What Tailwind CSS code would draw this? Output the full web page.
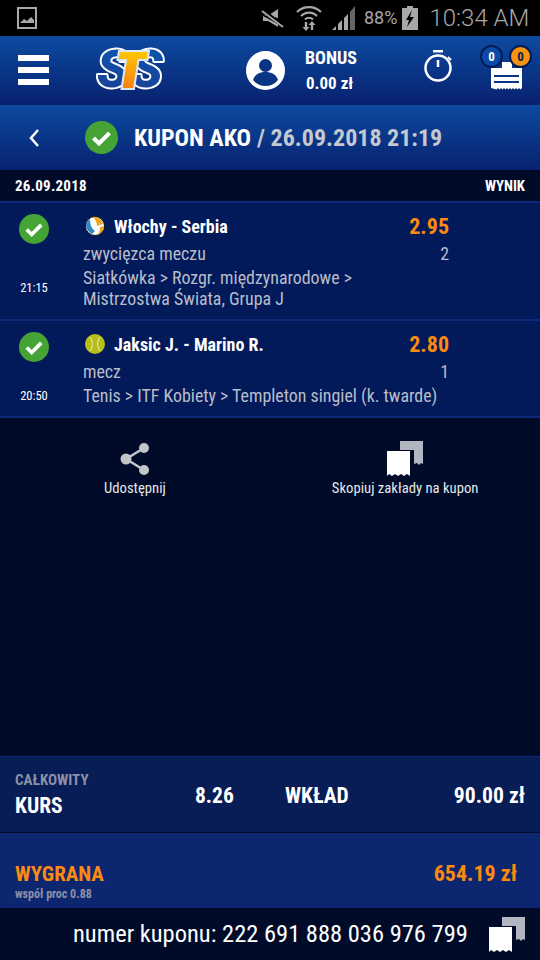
<!DOCTYPE html>
<html lang="en">
<head>
  <meta charset="UTF-8">
  <meta name="viewport" content="width=device-width, initial-scale=1.0">
  <title>Kupon AKO</title>
  <script src="https://cdn.jsdelivr.net/npm/@tailwindcss/browser@4"></script>
</head>
<body>
  <div class="w-[540px] h-[960px] overflow-hidden flex flex-col bg-[#000b29] font-['Roboto','Liberation_Sans',sans-serif] font-stretch-condensed text-white">

    <!-- status bar -->
    <div class="h-9 shrink-0 bg-black flex items-center pl-[17px] text-[#a8a8a8] whitespace-nowrap font-stretch-normal">
      <svg width="20" height="24" viewBox="0 0 20 24"><rect x="1" y="2" width="18" height="20" fill="none" stroke="#a8a8a8" stroke-width="2"/><path d="M3 17l4-4 3 2 4-4 3 3v3H3z" fill="#a8a8a8"/></svg>
      <svg class="ml-[224px]" width="24" height="20" viewBox="0 0 24 20"><path d="M2 7h6l9-6v9zM2 8v5h5l10 6v-3z" fill="#a8a8a8"/><path d="M1 2l21 16" stroke="#000" stroke-width="4"/><path d="M1 3l21 16" stroke="#a8a8a8" stroke-width="2"/></svg>
      <svg class="ml-[11px]" width="26" height="28" viewBox="0 0 26 28"><path d="M1 8a17 17 0 0 1 24 0M5 12a11 11 0 0 1 16 0M9 15.500a5.500 5.500 0 0 1 8 0" fill="none" stroke="#a8a8a8" stroke-width="2.200"/><path d="M16 17l-3.500 4h2.300v5h2.400v-5h2.300zM10 27l3.500-4h-2.300v-5H8.800v5H6.500z" fill="#a8a8a8"/></svg>
      <svg class="ml-[9px]" width="25" height="26" viewBox="0 0 25 26"><path d="M1 25l4-4v4zM7 25v-6l4-4v10zM13 25V13l4-4v16z" fill="#a8a8a8"/><path d="M19 25V7l5-6v24z" fill="#666"/></svg>
      <span class="ml-[8px] text-[18px] leading-none">88%</span>
      <svg class="ml-[5px]" width="16" height="24" viewBox="0 0 16 24"><path d="M5 0h6v2h5v22H0V2h5z" fill="#a8a8a8"/><path d="M10 4l-6 10h3l-2 7 7-10H8z" fill="#000"/></svg>
      <span class="ml-[11px] text-[24px] leading-none font-light">10:34 AM</span>
    </div>

    <!-- top nav -->
    <div class="h-[68px] shrink-0 relative flex items-center bg-gradient-to-b from-[#0d4ba1] to-[#08216f]">
      <div class="ml-[18px] w-[31px] flex flex-col gap-[6px]">
        <div class="h-[6px] bg-white"></div>
        <div class="h-[6px] bg-white"></div>
        <div class="h-[6px] bg-white"></div>
      </div>
      <svg class="ml-[49px] overflow-visible font-stretch-normal" width="68" height="46" viewBox="0 0 68 46">
        <defs>
          <linearGradient id="tfill" x1="0" y1="0" x2="0" y2="1"><stop offset="0" stop-color="#ffc800"/><stop offset="1" stop-color="#f57f17"/></linearGradient>
          <linearGradient id="sfill" x1="0" y1="0" x2="0" y2="1"><stop offset="0" stop-color="#0b57ad"/><stop offset="1" stop-color="#1b3f96"/></linearGradient>
        </defs>
        <g font-family="Roboto" font-style="italic" font-weight="900" font-size="52" fill="url(#sfill)" stroke="#fff" stroke-width="4" stroke-linejoin="round" paint-order="stroke">
          <text x="-1" y="40">S</text>
          <text x="33" y="40">S</text>
        </g>
        <path d="M21 4h30l-1.500 9h-9L36 42H23.500l4.500-29h-8.500z" fill="url(#tfill)" stroke="#dbe6f6" stroke-width="2"/>
      </svg>
      <svg class="ml-[80px]" width="39" height="39" viewBox="0 0 39 39"><circle cx="19.500" cy="19.500" r="19.500" fill="#fff"/><circle cx="19.500" cy="14.500" r="6.500" fill="#0a3585"/><path d="M7 29c2-6 7-8 12.500-8S30 23 32 29a16 16 0 0 1-25 0z" fill="#0a3585"/></svg>
      <div class="ml-[20px] mt-[4px] w-[60px] flex flex-col items-start font-bold">
        <span class="text-[18px] leading-[22px]">BONUS</span>
        <span class="text-[17px] leading-[28px] pl-[1px]">0.00 zł</span>
      </div>
      <svg class="ml-[58px] mb-[7px]" width="30" height="33" viewBox="0 0 30 33"><path d="M10 1h10" stroke="#fff" stroke-width="3"/><circle cx="15" cy="18" r="12.500" fill="none" stroke="#fff" stroke-width="2.500"/><path d="M15 10v7" stroke="#fff" stroke-width="2.500"/><path d="M25 7l3 3" stroke="#fff" stroke-width="2"/></svg>
      <svg class="ml-[38px] mt-[12px]" width="31" height="28" viewBox="0 0 31 28"><path d="M11 0h10v6h10v20l-1.500 1.500-1.500-1.500-1.500 1.500-1.500-1.500-1.500 1.500-1.500-1.500-1.500 1.500-1.500-1.500-1.500 1.500-1.500-1.500-1.500 1.500-1.500-1.500-1.500 1.500-1.500-1.500-1.500 1.500-1.500-1.500-1.500 1.500L0 26V6h11z" fill="#fff"/><path d="M3 14h25M3 20h25" stroke="#0a3585" stroke-width="2"/></svg>
      <span class="absolute left-[480px] top-[9px] w-[23px] h-[23px] rounded-full bg-[#0b4aa6] border-2 border-[#041b55] flex items-center justify-center text-[13px] font-bold">0</span>
      <span class="absolute left-[509px] top-[9px] w-[23px] h-[23px] rounded-full bg-[#f7930e] border-2 border-[#041b55] flex items-center justify-center text-[13px] font-bold text-[#05205f]">0</span>
    </div>

    <!-- title bar -->
    <div class="h-[66px] shrink-0 flex items-center bg-gradient-to-b from-[#0d4ba1] to-[#08216f] border-t border-[#08246f]">
      <svg class="ml-[28px]" width="12" height="18" viewBox="0 0 12 18"><path d="M10 1L3 9l7 8" fill="none" stroke="#fff" stroke-width="2.500"/></svg>
      <svg class="ml-[45px]" width="33" height="33" viewBox="0 0 33 33"><circle cx="16.500" cy="16.500" r="16.500" fill="#46a436"/><path d="M8.500 17l5.500 5.500 10.500-10.500" fill="none" stroke="#fff" stroke-width="4"/></svg>
      <span class="ml-[16px] text-[24px] font-bold">KUPON AKO</span>
      <span class="ml-[6px] text-[24px] font-bold text-[#c4c8d0]">/ 26.09.2018 21:19</span>
    </div>

    <!-- date row -->
    <div class="h-[33px] shrink-0 flex items-center justify-between px-[15px] pt-[1px] bg-[#000b29] font-bold border-b-2 border-[#0c2a7a]">
      <span class="text-[15px] tracking-[0.25px]">26.09.2018</span>
      <span class="text-[14.700px]">WYNIK</span>
    </div>

    <!-- bet rows -->
    <div class="h-[118px] shrink-0 flex bg-[#021a5a] border-b-2 border-[#0c2a7a]">
      <div class="w-[68px] shrink-0 flex flex-col items-center pt-[11px]">
        <svg width="30" height="30" viewBox="0 0 33 33"><circle cx="16.500" cy="16.500" r="16.500" fill="#46a436"/><path d="M8.500 17l5.500 5.500 10.500-10.500" fill="none" stroke="#fff" stroke-width="4"/></svg>
        <span class="mt-[36px] text-[12.500px] leading-4">21:15</span>
      </div>
      <div class="w-[381px] pl-[15px]">
        <div class="h-[22px] mt-[12px] flex items-center">
          <svg class="ml-[2px]" width="20" height="20" viewBox="0 0 20 20"><circle cx="10" cy="10" r="9.500" fill="#fff" stroke="#111" stroke-width="1"/><path d="M8 1c4-1 9 2 10 7l-6 2C12 6 10 3 8 1z" fill="#f0a820"/><path d="M1 8c1-2 2-4 4-5 0 5 1 9 5 12l-3 3C3 16 1 12 1 8z" fill="#2f88c6"/><path d="M19 10c0 4-3 8-7 9 2-2 3-4 3-8z" fill="#f0a820"/></svg>
          <span class="ml-[9px] text-[18px] font-bold">Włochy - Serbia</span>
          <span class="ml-auto text-[22px] font-bold text-[#fb8a0f]">2.95</span>
        </div>
        <div class="mt-[6px] flex justify-between text-[17.900px] leading-[22px] text-[#b9bdc9]"><span>zwycięzca meczu</span><span>2</span></div>
        <p class="mt-[2px] text-[17.900px] leading-[21px] text-[#b9bdc9]">Siatkówka &gt; Rozgr. międzynarodowe &gt;<br>Mistrzostwa Świata, Grupa J</p>
      </div>
    </div>
    <div class="h-[97px] shrink-0 flex bg-[#021a5a] border-b-2 border-[#0c2a7a]">
      <div class="w-[68px] shrink-0 flex flex-col items-center pt-[11px]">
        <svg width="30" height="30" viewBox="0 0 33 33"><circle cx="16.500" cy="16.500" r="16.500" fill="#46a436"/><path d="M8.500 17l5.500 5.500 10.500-10.500" fill="none" stroke="#fff" stroke-width="4"/></svg>
        <span class="mt-[26px] text-[12.500px] leading-4">20:50</span>
      </div>
      <div class="w-[381px] pl-[15px]">
        <div class="h-[22px] mt-[12px] flex items-center">
          <svg class="ml-[2px]" width="20" height="20" viewBox="0 0 20 20"><circle cx="10" cy="10" r="10" fill="#b7c01a"/><path d="M5 3c3 4 3 10 0 14M15 3c-3 4-3 10 0 14" fill="none" stroke="#eef0b0" stroke-width="1"/></svg>
          <span class="ml-[9px] text-[18px] font-bold">Jaksic J. - Marino R.</span>
          <span class="ml-auto text-[22px] font-bold text-[#fb8a0f]">2.80</span>
        </div>
        <div class="mt-[6px] flex justify-between text-[17.900px] leading-[22px] text-[#b9bdc9]"><span>mecz</span><span>1</span></div>
        <p class="mt-[2px] text-[17.900px] leading-[21px] text-[#b9bdc9]">Tenis &gt; ITF Kobiety &gt; Templeton singiel (k. twarde)</p>
      </div>
    </div>

    <!-- actions -->
    <div class="flex-1 flex items-start bg-[#000b29] pt-[24px]">
      <div class="ml-[104px] flex flex-col items-center">
        <svg width="30" height="34" viewBox="0 0 30 34"><path d="M24 6L6 17l18 11" fill="none" stroke="#c3c5ca" stroke-width="2.500"/><circle cx="24" cy="6" r="5" fill="#c3c5ca"/><circle cx="6" cy="17" r="5.500" fill="#c3c5ca"/><circle cx="24" cy="28" r="5" fill="#c3c5ca"/></svg>
        <span class="mt-[2px] text-[14.700px] leading-[20px] text-[#e6e7ea]">Udostępnij</span>
      </div>
      <div class="ml-[166px] flex flex-col items-center -mt-[2px]">
        <svg width="37" height="36" viewBox="0 0 37 36"><path d="M13 1h23v23l-2-1-2 2-2-2-3 1V10H13z" fill="#b2b6c0"/><path d="M0 11h23v25l-3-2-3 2-3-2-3 2-3-2-3 2-3-2-2 2z" fill="#fff"/></svg>
        <span class="mt-[2px] text-[14.700px] leading-[20px] text-[#e6e7ea]">Skopiuj zakłady na kupon</span>
      </div>
    </div>

    <!-- totals -->
    <div class="h-[77px] shrink-0 flex items-center bg-[#081c56] border-t border-[#0c2a7a] border-b border-b-[#000b29] px-[15px] font-bold">
      <div class="w-[180px]">
        <div class="text-[15px] leading-[18px] text-[#8b90a5]">CAŁKOWITY</div>
        <div class="mt-[5px] text-[21.500px] leading-[24px]">KURS</div>
      </div>
      <span class="w-[90px] mt-[2px] text-[21.500px] leading-none">8.26</span>
      <span class="mt-[3px] text-[21.500px] leading-none">WKŁAD</span>
      <span class="ml-auto mt-[2px] text-[21.700px] leading-none">90.00 zł</span>
    </div>
    <div class="h-[75px] shrink-0 flex items-end bg-[#0d2670] pl-[15px] pr-[23px] pb-[7px] font-bold">
      <div>
        <div class="text-[21px] leading-[24px] mb-[-1px] text-[#fb8a0f]">WYGRANA</div>
        <div class="mt-[2px] text-[12px] leading-[14px] text-[#8b90a5]">współ proc 0.88</div>
      </div>
      <span class="ml-auto mb-[16px] text-[22px] leading-none text-[#fb8a0f]">654.19 zł</span>
    </div>

    <!-- coupon number -->
    <div class="h-[52px] shrink-0 flex items-center bg-[#000b29] pl-[73px]">
      <span class="mt-[1px] text-[24.500px] leading-none whitespace-nowrap">numer kuponu: 222 691 888 036 976 799</span>
      <svg class="ml-[21px]" width="37" height="36" viewBox="0 0 37 36"><path d="M13 1h23v23l-2-1-2 2-2-2-3 1V10H13z" fill="#b2b6c0"/><path d="M0 11h23v25l-3-2-3 2-3-2-3 2-3-2-3 2-3-2-2 2z" fill="#fff"/></svg>
    </div>
  </div>
</body>
</html>
